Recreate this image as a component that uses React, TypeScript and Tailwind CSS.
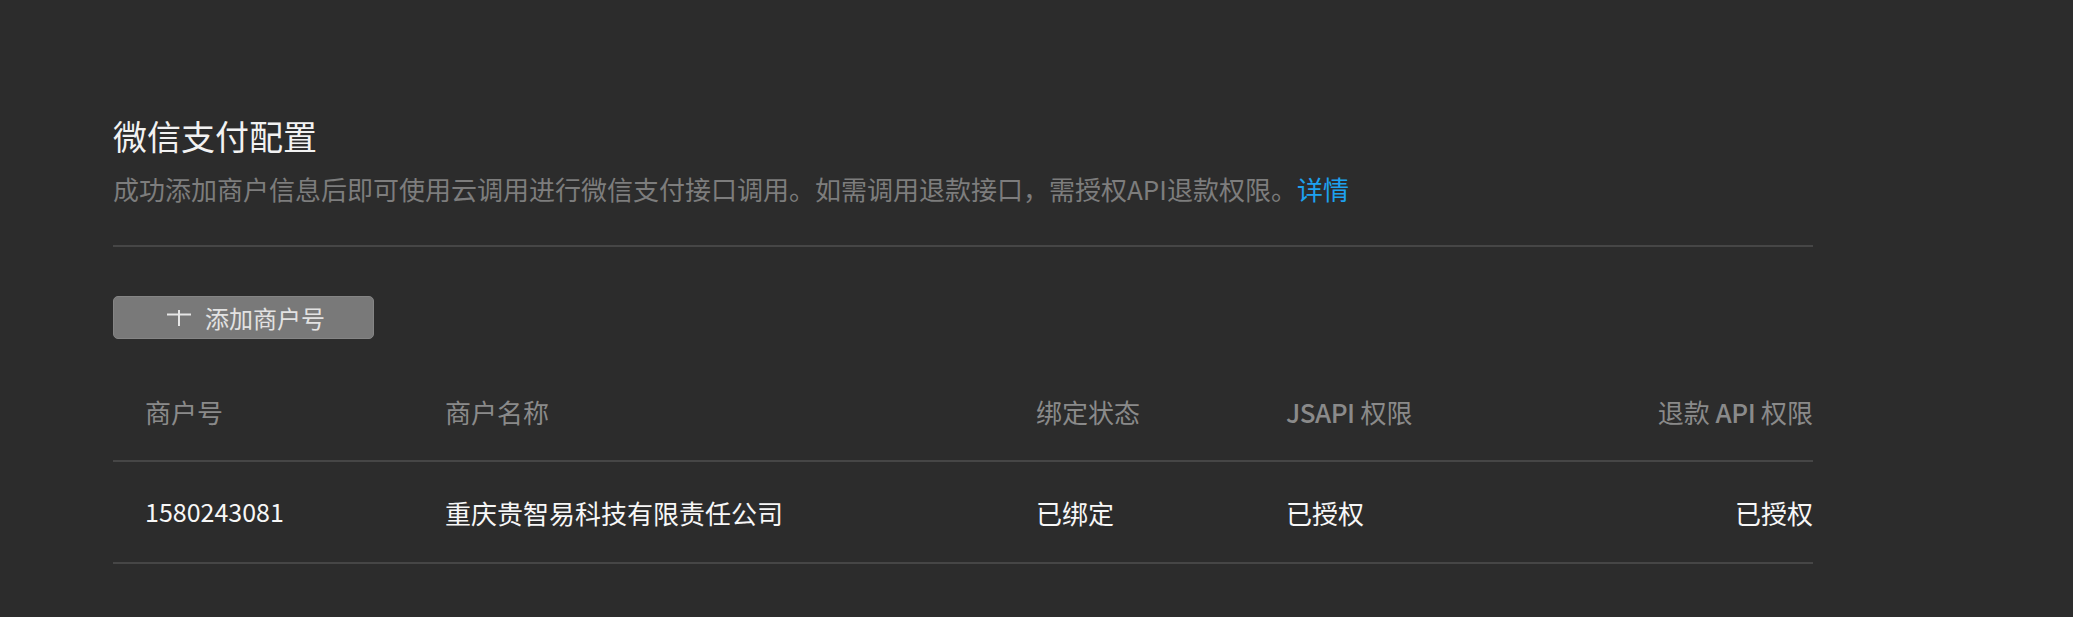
import React from "react";

const font = { fontFamily: '"Noto Sans CJK SC", "Noto Sans", sans-serif' };

export default function App() {
  return (
    <div
      className="w-[2073px] h-[617px] bg-[#2c2c2c] overflow-hidden"
      style={font}
    >
      <div className="ml-[113px] w-[1700px] pt-[114px]">
        <h1 className="text-[34px] leading-[44px] text-[#f2f2f2] font-normal">
          微信支付配置
        </h1>
        <p className="mt-[13px] text-[26px] leading-[36px] text-[#7d7d7d]">
          成功添加商户信息后即可使用云调用进行微信支付接口调用。如需调用退款接口，需授权API退款权限。
          <span className="text-[#1da1ef]">详情</span>
        </p>
        <div className="mt-[38px] h-[2px] bg-[#464646]" />
        <button className="mt-[49px] w-[261px] h-[43px] rounded-[5px] bg-[#797979] border border-[#858585] flex items-center justify-start pl-[53px] gap-[14px] text-[24px] text-[#e2e2e2]">
          <svg width="24" height="16" viewBox="0 0 24 16" className="mt-[1px]">
            <line x1="0" y1="4.5" x2="24" y2="4.5" stroke="#e6e6e6" strokeWidth="2" />
            <line x1="12" y1="0" x2="12" y2="16" stroke="#e6e6e6" strokeWidth="2" />
          </svg>
          <span className="leading-[30px]">添加商户号</span>
        </button>
        <div className="mt-[24px] h-[99px] flex items-center border-b-2 border-[#464646] text-[26px] text-[#8a8a8a]">
          <div className="w-[300px] pl-8">商户号</div>
          <div className="w-[591px] pl-8">商户名称</div>
          <div className="w-[250px] pl-8">绑定状态</div>
          <div className="w-[250px] pl-8">
            <span className="font-medium tracking-[-0.5px]">JSAPI</span> 权限
          </div>
          <div className="flex-1 text-right">
            退款 <span className="font-medium tracking-[-0.5px]">API</span> 权限
          </div>
        </div>
        <div className="h-[102px] flex items-center border-b-2 border-[#464646] text-[26px] text-[#f7f7f7]">
          <div className="w-[300px] pl-8 text-[25px]">1580243081</div>
          <div className="w-[591px] pl-8">重庆贵智易科技有限责任公司</div>
          <div className="w-[250px] pl-8">已绑定</div>
          <div className="w-[250px] pl-8">已授权</div>
          <div className="flex-1 text-right">已授权</div>
        </div>
      </div>
    </div>
  );
}
